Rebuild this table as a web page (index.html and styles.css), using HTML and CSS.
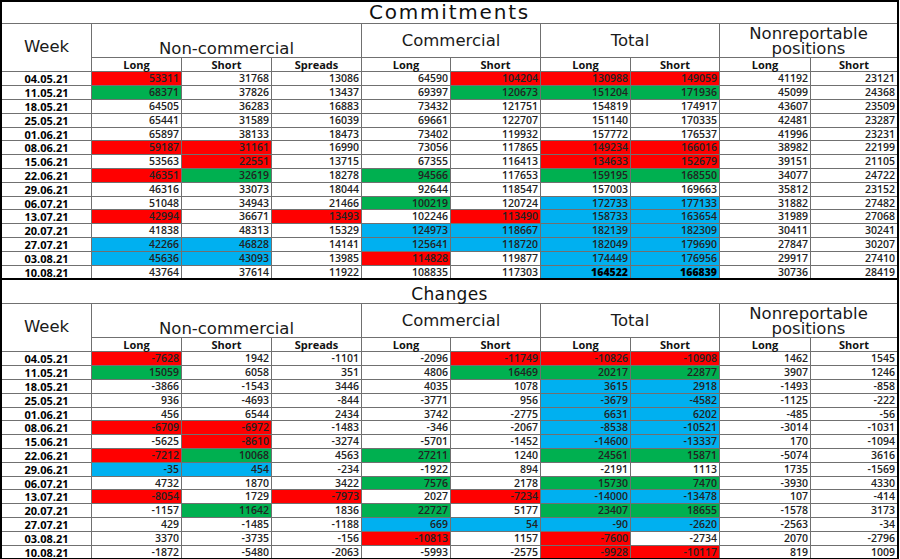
FILE: index.html
```html
<!DOCTYPE html>
<html>
<head>
<meta charset="utf-8">
<link rel="stylesheet" href="styles.css">
</head>
<body>
<div class="sheet top">
  <div class="c title t-big">Commitments</div>
  <div class="c gh week">Week</div>
  <div class="c gh nc">Non-commercial</div>
  <div class="c gh mid s2">Commercial</div>
  <div class="c gh mid s2">Total</div>
  <div class="c gh nr s2"><span class="ln">Nonreportable</span><span class="ln">positions</span></div>
  <div class="c sh">Long</div><div class="c sh">Short</div><div class="c sh">Spreads</div><div class="c sh">Long</div><div class="c sh">Short</div><div class="c sh">Long</div><div class="c sh">Short</div><div class="c sh">Long</div><div class="c sh">Short</div>

  <div class="c d">04.05.21</div><div class="c n r">53311</div><div class="c n">31768</div><div class="c n">13086</div><div class="c n">64590</div><div class="c n r">104204</div><div class="c n r">130988</div><div class="c n r">149059</div><div class="c n">41192</div><div class="c n">23121</div>
  <div class="c d">11.05.21</div><div class="c n g">68371</div><div class="c n">37826</div><div class="c n">13437</div><div class="c n">69397</div><div class="c n g">120673</div><div class="c n g">151204</div><div class="c n g">171936</div><div class="c n">45099</div><div class="c n">24368</div>
  <div class="c d">18.05.21</div><div class="c n">64505</div><div class="c n">36283</div><div class="c n">16883</div><div class="c n">73432</div><div class="c n">121751</div><div class="c n">154819</div><div class="c n">174917</div><div class="c n">43607</div><div class="c n">23509</div>
  <div class="c d">25.05.21</div><div class="c n">65441</div><div class="c n">31589</div><div class="c n">16039</div><div class="c n">69661</div><div class="c n">122707</div><div class="c n">151140</div><div class="c n">170335</div><div class="c n">42481</div><div class="c n">23287</div>
  <div class="c d">01.06.21</div><div class="c n">65897</div><div class="c n">38133</div><div class="c n">18473</div><div class="c n">73402</div><div class="c n">119932</div><div class="c n">157772</div><div class="c n">176537</div><div class="c n">41996</div><div class="c n">23231</div>
  <div class="c d">08.06.21</div><div class="c n r">59187</div><div class="c n r">31161</div><div class="c n">16990</div><div class="c n">73056</div><div class="c n">117865</div><div class="c n r">149234</div><div class="c n r">166016</div><div class="c n">38982</div><div class="c n">22199</div>
  <div class="c d">15.06.21</div><div class="c n">53563</div><div class="c n r">22551</div><div class="c n">13715</div><div class="c n">67355</div><div class="c n">116413</div><div class="c n r">134633</div><div class="c n r">152679</div><div class="c n">39151</div><div class="c n">21105</div>
  <div class="c d">22.06.21</div><div class="c n r">46351</div><div class="c n g">32619</div><div class="c n">18278</div><div class="c n g">94566</div><div class="c n">117653</div><div class="c n g">159195</div><div class="c n g">168550</div><div class="c n">34077</div><div class="c n">24722</div>
  <div class="c d">29.06.21</div><div class="c n">46316</div><div class="c n">33073</div><div class="c n">18044</div><div class="c n">92644</div><div class="c n">118547</div><div class="c n">157003</div><div class="c n">169663</div><div class="c n">35812</div><div class="c n">23152</div>
  <div class="c d">06.07.21</div><div class="c n">51048</div><div class="c n">34943</div><div class="c n">21466</div><div class="c n g">100219</div><div class="c n">120724</div><div class="c n b">172733</div><div class="c n b">177133</div><div class="c n">31882</div><div class="c n">27482</div>
  <div class="c d">13.07.21</div><div class="c n r">42994</div><div class="c n">36671</div><div class="c n r">13493</div><div class="c n">102246</div><div class="c n r">113490</div><div class="c n b">158733</div><div class="c n b">163654</div><div class="c n">31989</div><div class="c n">27068</div>
  <div class="c d">20.07.21</div><div class="c n">41838</div><div class="c n">48313</div><div class="c n">15329</div><div class="c n b">124973</div><div class="c n b">118667</div><div class="c n b">182139</div><div class="c n b">182309</div><div class="c n">30411</div><div class="c n">30241</div>
  <div class="c d">27.07.21</div><div class="c n b">42266</div><div class="c n b">46828</div><div class="c n">14141</div><div class="c n b">125641</div><div class="c n b">118720</div><div class="c n b">182049</div><div class="c n b">179690</div><div class="c n">27847</div><div class="c n">30207</div>
  <div class="c d">03.08.21</div><div class="c n b">45636</div><div class="c n b">43093</div><div class="c n">13985</div><div class="c n r">114828</div><div class="c n">119877</div><div class="c n b">174449</div><div class="c n b">176956</div><div class="c n">29917</div><div class="c n">27410</div>
  <div class="c d">10.08.21</div><div class="c n">43764</div><div class="c n">37614</div><div class="c n">11922</div><div class="c n">108835</div><div class="c n">117303</div><div class="c n b strong">164522</div><div class="c n b strong">166839</div><div class="c n">30736</div><div class="c n">28419</div>
</div>

<div class="sheet bottom">
  <div class="c title t-small">Changes</div>
  <div class="c gh week">Week</div>
  <div class="c gh nc">Non-commercial</div>
  <div class="c gh mid s2">Commercial</div>
  <div class="c gh mid s2">Total</div>
  <div class="c gh nr s2"><span class="ln">Nonreportable</span><span class="ln">positions</span></div>
  <div class="c sh">Long</div><div class="c sh">Short</div><div class="c sh">Spreads</div><div class="c sh">Long</div><div class="c sh">Short</div><div class="c sh">Long</div><div class="c sh">Short</div><div class="c sh">Long</div><div class="c sh">Short</div>

  <div class="c d">04.05.21</div><div class="c n r">-7628</div><div class="c n">1942</div><div class="c n">-1101</div><div class="c n">-2096</div><div class="c n r">-11749</div><div class="c n r">-10826</div><div class="c n r">-10908</div><div class="c n">1462</div><div class="c n">1545</div>
  <div class="c d">11.05.21</div><div class="c n g">15059</div><div class="c n">6058</div><div class="c n">351</div><div class="c n">4806</div><div class="c n g">16469</div><div class="c n g">20217</div><div class="c n g">22877</div><div class="c n">3907</div><div class="c n">1246</div>
  <div class="c d">18.05.21</div><div class="c n">-3866</div><div class="c n">-1543</div><div class="c n">3446</div><div class="c n">4035</div><div class="c n">1078</div><div class="c n b">3615</div><div class="c n b">2918</div><div class="c n">-1493</div><div class="c n">-858</div>
  <div class="c d">25.05.21</div><div class="c n">936</div><div class="c n">-4693</div><div class="c n">-844</div><div class="c n">-3771</div><div class="c n">956</div><div class="c n b">-3679</div><div class="c n b">-4582</div><div class="c n">-1125</div><div class="c n">-222</div>
  <div class="c d">01.06.21</div><div class="c n">456</div><div class="c n">6544</div><div class="c n">2434</div><div class="c n">3742</div><div class="c n">-2775</div><div class="c n b">6631</div><div class="c n b">6202</div><div class="c n">-485</div><div class="c n">-56</div>
  <div class="c d">08.06.21</div><div class="c n r">-6709</div><div class="c n r">-6972</div><div class="c n">-1483</div><div class="c n">-346</div><div class="c n">-2067</div><div class="c n b">-8538</div><div class="c n b">-10521</div><div class="c n">-3014</div><div class="c n">-1031</div>
  <div class="c d">15.06.21</div><div class="c n">-5625</div><div class="c n r">-8610</div><div class="c n">-3274</div><div class="c n">-5701</div><div class="c n">-1452</div><div class="c n b">-14600</div><div class="c n b">-13337</div><div class="c n">170</div><div class="c n">-1094</div>
  <div class="c d">22.06.21</div><div class="c n r">-7212</div><div class="c n g">10068</div><div class="c n">4563</div><div class="c n g">27211</div><div class="c n">1240</div><div class="c n g">24561</div><div class="c n g">15871</div><div class="c n">-5074</div><div class="c n">3616</div>
  <div class="c d">29.06.21</div><div class="c n b">-35</div><div class="c n b">454</div><div class="c n">-234</div><div class="c n">-1922</div><div class="c n">894</div><div class="c n">-2191</div><div class="c n">1113</div><div class="c n">1735</div><div class="c n">-1569</div>
  <div class="c d">06.07.21</div><div class="c n">4732</div><div class="c n">1870</div><div class="c n">3422</div><div class="c n g">7576</div><div class="c n">2178</div><div class="c n g">15730</div><div class="c n g">7470</div><div class="c n">-3930</div><div class="c n">4330</div>
  <div class="c d">13.07.21</div><div class="c n r">-8054</div><div class="c n">1729</div><div class="c n r">-7973</div><div class="c n">2027</div><div class="c n r">-7234</div><div class="c n b">-14000</div><div class="c n b">-13478</div><div class="c n">107</div><div class="c n">-414</div>
  <div class="c d">20.07.21</div><div class="c n">-1157</div><div class="c n g">11642</div><div class="c n">1836</div><div class="c n g">22727</div><div class="c n">5177</div><div class="c n g">23407</div><div class="c n g">18655</div><div class="c n">-1578</div><div class="c n">3173</div>
  <div class="c d">27.07.21</div><div class="c n">429</div><div class="c n">-1485</div><div class="c n">-1188</div><div class="c n b">669</div><div class="c n b">54</div><div class="c n b">-90</div><div class="c n b">-2620</div><div class="c n">-2563</div><div class="c n">-34</div>
  <div class="c d">03.08.21</div><div class="c n">3370</div><div class="c n">-3735</div><div class="c n">-156</div><div class="c n r">-10813</div><div class="c n">1157</div><div class="c n r">-7600</div><div class="c n">-2734</div><div class="c n">2070</div><div class="c n">-2796</div>
  <div class="c d">10.08.21</div><div class="c n">-1872</div><div class="c n">-5480</div><div class="c n">-2063</div><div class="c n">-5993</div><div class="c n">-2575</div><div class="c n r">-9928</div><div class="c n r">-10117</div><div class="c n">819</div><div class="c n">1009</div>
</div>
</body>
</html>
```

FILE: styles.css
```css
html, body {
  margin: 0;
  padding: 0;
  background: #fff;
}

.sheet {
  display: grid;
  width: max-content;
  grid-template-columns: 89px 89px 89px 89px 88px 89px 89px 88px 90px 86px;
  gap: 1px;
  background: #707070;
  border: 2px solid #000;
}

.sheet.top {
  grid-template-rows: 21px 33px 13px repeat(3, 13px 13px 13px 13px 12px);
}

.sheet.bottom {
  border-top: 0;
  grid-template-rows: 23px 33px 13px repeat(3, 13px 13px 13px 13px 12px);
}

.c {
  background: #fff;
  display: flex;
  align-items: center;
  white-space: nowrap;
}

.title {
  grid-column: 1 / -1;
  justify-content: center;
  align-items: flex-end;
  font-family: "DejaVu Sans", sans-serif;
  line-height: 1;
  color: #111;
}

.t-big {
  font-size: 20px;
  letter-spacing: 1.8px;
  padding-bottom: 1px;
}

.t-small {
  font-size: 17px;
  letter-spacing: 0.4px;
}

.gh {
  font-family: "DejaVu Sans", sans-serif;
  font-size: 16.5px;
  line-height: 1;
  color: #1a1a1a;
  justify-content: center;
  text-align: center;
}

.week {
  grid-row: span 2;
}

.nc {
  grid-column: span 3;
  align-items: flex-end;
}

.s2 {
  grid-column: span 2;
}

.mid {
  padding-top: 2px;
}

.nr {
  flex-direction: column;
  justify-content: center;
  align-items: center;
  gap: 0;
}

.ln {
  display: block;
  line-height: 15px;
  height: 15px;
}

.sh {
  justify-content: center;
  font-family: "Open Sans", sans-serif;
  font-weight: 700;
  font-size: 11px;
  line-height: 1;
  color: #111;
}

.d {
  justify-content: center;
  font-family: "Open Sans", sans-serif;
  font-weight: 700;
  font-size: 11px;
  line-height: 1;
  color: #000;
}

.n {
  justify-content: flex-end;
  padding-right: 2px;
  font-family: "Open Sans", sans-serif;
  font-weight: 600;
  font-size: 10.5px;
  line-height: 1;
  color: #222;
}

.n.strong {
  font-weight: 800;
  color: #000;
}

.r { background: #ff0000; }
.g { background: #00b050; }
.b { background: #00b0f0; }
```
